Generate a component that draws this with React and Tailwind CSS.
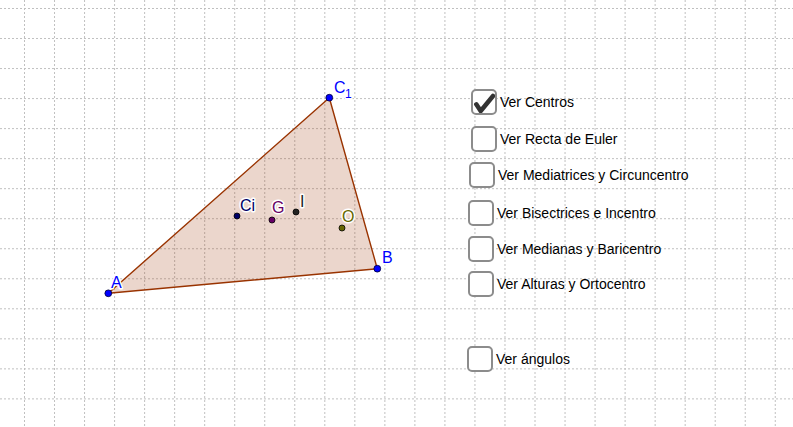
import React from 'react';

const options = [
  { label: 'Ver Centros', x: 471, y: 89, checked: true },
  { label: 'Ver Recta de Euler', x: 471, y: 126 },
  { label: 'Ver Mediatrices y Circuncentro', x: 469, y: 162 },
  { label: 'Ver Bisectrices e Incentro', x: 468, y: 200 },
  { label: 'Ver Medianas y Baricentro', x: 468, y: 236 },
  { label: 'Ver Alturas y Ortocentro', x: 468, y: 271 },
  { label: 'Ver ángulos', x: 467, y: 346 },
];

const centers = [
  { name: 'Ci', x: 237, y: 216, c: '#000066', lx: 240, ly: 211 },
  { name: 'G', x: 272, y: 220, c: '#660066', lx: 272, ly: 213 },
  { name: 'I', x: 296, y: 212, c: '#222222', lx: 300, ly: 207 },
  { name: 'O', x: 342, y: 228, c: '#666600', lx: 342, ly: 222 },
];

function Grid() {
  const v = [];
  for (let i = 0; i < 27; i++) v.push(24.5 + i * 30.03);
  const h = [];
  for (let i = 0; i < 15; i++) h.push(8.5 + i * 30.03);
  return (
    <g stroke="#c0c0c0" strokeWidth="1" strokeDasharray="2 2">
      {v.map((x) => (
        <line key={'v' + x} x1={x} y1="0" x2={x} y2="427" />
      ))}
      {h.map((y) => (
        <line key={'h' + y} x1="0" y1={y} x2="793" y2={y} />
      ))}
    </g>
  );
}

function Label({ x, y, color, children, size = 16 }) {
  return (
    <text
      x={x}
      y={y}
      fill={color}
      stroke="#ffffff"
      strokeWidth="3"
      strokeLinejoin="round"
      paintOrder="stroke"
      fontSize={size}
      fontFamily="'Liberation Sans', Arial, sans-serif"
    >
      {children}
    </text>
  );
}

function CheckBox({ label, x, y, checked }) {
  return (
    <div className="absolute flex items-center gap-[3px]" style={{ left: x, top: y }}>
      <div className="w-[26px] h-[26px] rounded-[5px] border-2 border-[#8c8c8c] bg-white box-border">
        {checked && (
          <svg width="22" height="22" viewBox="0 0 22 22">
            <path d="M3.3 13.3 L7.7 20 L20 5" fill="none" stroke="#333333" strokeWidth="4.5" strokeLinecap="round" strokeLinejoin="round" />
          </svg>
        )}
      </div>
      <span className="text-[14px] text-black font-['Liberation_Sans',Arial,sans-serif] leading-none whitespace-nowrap">{label}</span>
    </div>
  );
}

export default function App() {
  return (
    <div className="relative w-[793px] h-[427px] bg-white overflow-hidden">
      <svg className="absolute inset-0" width="793" height="427">
        <Grid />
        <polygon
          points="108.3,293.3 377.3,268.7 329.3,97.7"
          fill="#993300"
          fillOpacity="0.2"
          stroke="#993300"
          strokeWidth="1.4"
          strokeLinejoin="round"
        />
        {centers.map((p) => (
          <circle key={p.name} cx={p.x} cy={p.y} r="3" fill={p.c} stroke="#000" strokeWidth="0.8" />
        ))}
        {[
          [108.3, 293.3],
          [377.3, 268.7],
          [329.3, 97.7],
        ].map(([x, y]) => (
          <circle key={x} cx={x} cy={y} r="3.4" fill="#0000ff" stroke="#000033" strokeWidth="0.8" />
        ))}
        <Label x={111} y={288} color="#0000ff">A</Label>
        <Label x={382} y={263} color="#0000ff">B</Label>
        <Label x={334} y={93} color="#0000ff">C</Label>
        <Label x={345} y={98} color="#0000ff" size={12}>1</Label>
        {centers.map((p) => (
          <Label key={p.name} x={p.lx} y={p.ly} color={p.c}>{p.name}</Label>
        ))}
      </svg>
      {options.map((o) => (
        <CheckBox key={o.label} {...o} />
      ))}
    </div>
  );
}
